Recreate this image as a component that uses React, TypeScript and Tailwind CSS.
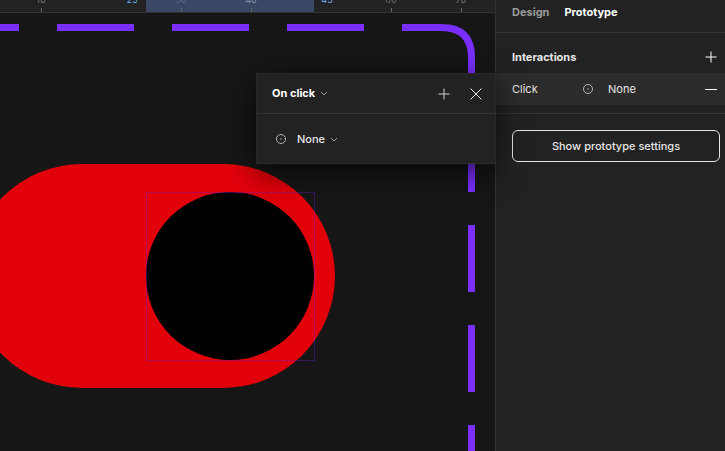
const sans = "font-['Inter','Liberation_Sans',sans-serif]";

const rulerMarks = [
    { x: 41, label: '10', tick: true, cls: 'text-[#7a7a7a]' },
    { x: 132, label: '25', tick: false, cls: 'text-[#6db3f2]' },
    { x: 181, label: '30', tick: true, cls: 'text-[#5f6b85]' },
    { x: 251, label: '40', tick: true, cls: 'text-[#8b93a8]' },
    { x: 327, label: '45', tick: false, cls: 'text-[#6db3f2]' },
    { x: 391, label: '60', tick: true, cls: 'text-[#6a6a6a]' },
    { x: 461, label: '70', tick: true, cls: 'text-[#7a7a7a]' },
];

function Target() {
    return (
        <svg width="12" height="12" viewBox="0 0 12 12" fill="none" className="shrink-0">
            <circle cx="6" cy="6" r="4.5" stroke="#b3b3b3" />
            <circle cx="6" cy="6" r="0.8" fill="#b3b3b3" />
        </svg>
    );
}

function Chevron() {
    return (
        <svg width="8" height="5" viewBox="0 0 8 5" fill="none" className="shrink-0">
            <path d="M1 1l3 3 3-3" stroke="#9a9a9a" />
        </svg>
    );
}

function Plus({ color = '#d0d0d0' }: { color?: string }) {
    return (
        <svg width="12" height="12" viewBox="0 0 12 12" fill="none" className="shrink-0">
            <path d="M6 0.5v11M0.5 6h11" stroke={color} />
        </svg>
    );
}

function Ruler() {
    return (
        <div className="relative h-[13px] shrink-0 overflow-hidden border-b border-[#333333] bg-[#222222]">
            <div className="absolute left-[146px] top-0 h-full w-[168px] bg-[#3a4866]" />
            {rulerMarks.map(m => (
                <div key={m.label}>
                    <span
                        className={`absolute top-[-6px] w-6 -translate-x-1/2 text-center text-[9px] leading-[12px] ${m.cls}`}
                        style={{ left: m.x }}
                    >
                        {m.label}
                    </span>
                    {m.tick && <div className="absolute top-[8px] h-[4px] w-px bg-[#666666]" style={{ left: m.x }} />}
                </div>
            ))}
        </div>
    );
}

function Canvas() {
    return (
        <div className="relative min-w-0 flex-1 bg-[#161616]">
            {/* frame stroke, coords relative to canvas (y - 13) */}
            <svg width="495" height="438" viewBox="0 0 495 438" fill="none" className="absolute left-0 top-0">
                <path
                    d="M0 14.5H19M57 14.5H134M172 14.5H249M287 14.5H364M402 14.5H441.5Q471.5 14.5 471.5 44.5V179M471.5 212V279M471.5 312V379M471.5 412V438"
                    stroke="#7b2fff"
                    strokeWidth="7"
                />
            </svg>

            {/* toggle */}
            <div className="absolute left-[-30px] top-[151px] h-[224px] w-[365px] rounded-full bg-[#e2000b]" />
            <div className="absolute left-[146px] top-[179px] h-[168px] w-[168px] rounded-full bg-black" />
            <svg width="170" height="170" viewBox="0 0 170 170" fill="none" className="absolute left-[146px] top-[179px]">
                <rect x="0.5" y="0.5" width="168" height="168" stroke="#6a1fe0" strokeOpacity="0.7" strokeDasharray="1 1" />
            </svg>

            {/* interaction popup */}
            <div className="absolute left-[256px] top-[60px] z-10 flex h-[91px] w-[240px] flex-col border border-[#2a2a2a] bg-[#222222] shadow-[0_8px_28px_rgba(0,0,0,0.65)]">
                <div className="flex h-[40px] shrink-0 items-center border-b border-[#333333] pl-[15px] pr-[13px]">
                    <span className="text-[11px] font-bold text-white">On click</span>
                    <span className="ml-[5px]"><Chevron /></span>
                    <span className="ml-auto mr-[20px]"><Plus /></span>
                    <svg width="12" height="12" viewBox="0 0 12 12" fill="none" className="shrink-0">
                        <path d="M0.5 0.5l11 11M11.5 0.5l-11 11" stroke="#e6e6e6" />
                    </svg>
                </div>
                <div className="flex flex-1 items-center pl-[18px] pt-[1px]">
                    <Target />
                    <span className="ml-[10px] text-[11px] font-medium text-[#e6e6e6]">None</span>
                    <span className="ml-[5px]"><Chevron /></span>
                </div>
            </div>
        </div>
    );
}

function PropsPanel() {
    return (
        <aside className="flex w-[230px] shrink-0 flex-col border-l border-[#333333] bg-[#222222]">
            <div className="flex h-[33px] shrink-0 items-start gap-[15px] border-b border-[#333333] pl-4 pt-[5px] text-[11px] font-bold leading-[14px]">
                <span className="text-[#9a9a9a]">Design</span>
                <span className="text-white">Prototype</span>
            </div>
            <div className="flex h-[40px] shrink-0 items-center justify-between pl-4 pr-[8px] pt-[8px]">
                <span className="text-[11px] font-bold text-[#e6e6e6]">Interactions</span>
                <Plus color="#ffffff" />
            </div>
            <div className="flex h-[32px] shrink-0 items-center bg-[#2c2c2c] pl-4 pr-[8px]">
                <span className="w-[70px] text-[11px] text-[#e6e6e6]">Click</span>
                <Target />
                <span className="ml-[14px] text-[11px] text-[#e6e6e6]">None</span>
                <div className="ml-auto h-px w-[12px] bg-white" />
            </div>
            <div className="flex flex-1 flex-col px-4">
                <div className="-mx-4 mt-[8px] border-t border-[#333333]" />
                <button className="mt-[16px] h-[32px] w-[208px] rounded-[6px] border border-[#e6e6e6] text-[11px] font-medium text-[#e6e6e6]">
                    Show prototype settings
                </button>
            </div>
        </aside>
    );
}

export default function App() {
    return (
        <div className={`flex h-[451px] w-[725px] overflow-hidden bg-[#222222] ${sans}`}>
            <div className="flex min-w-0 flex-1 flex-col">
                <Ruler />
                <Canvas />
            </div>
            <PropsPanel />
        </div>
    );
}
